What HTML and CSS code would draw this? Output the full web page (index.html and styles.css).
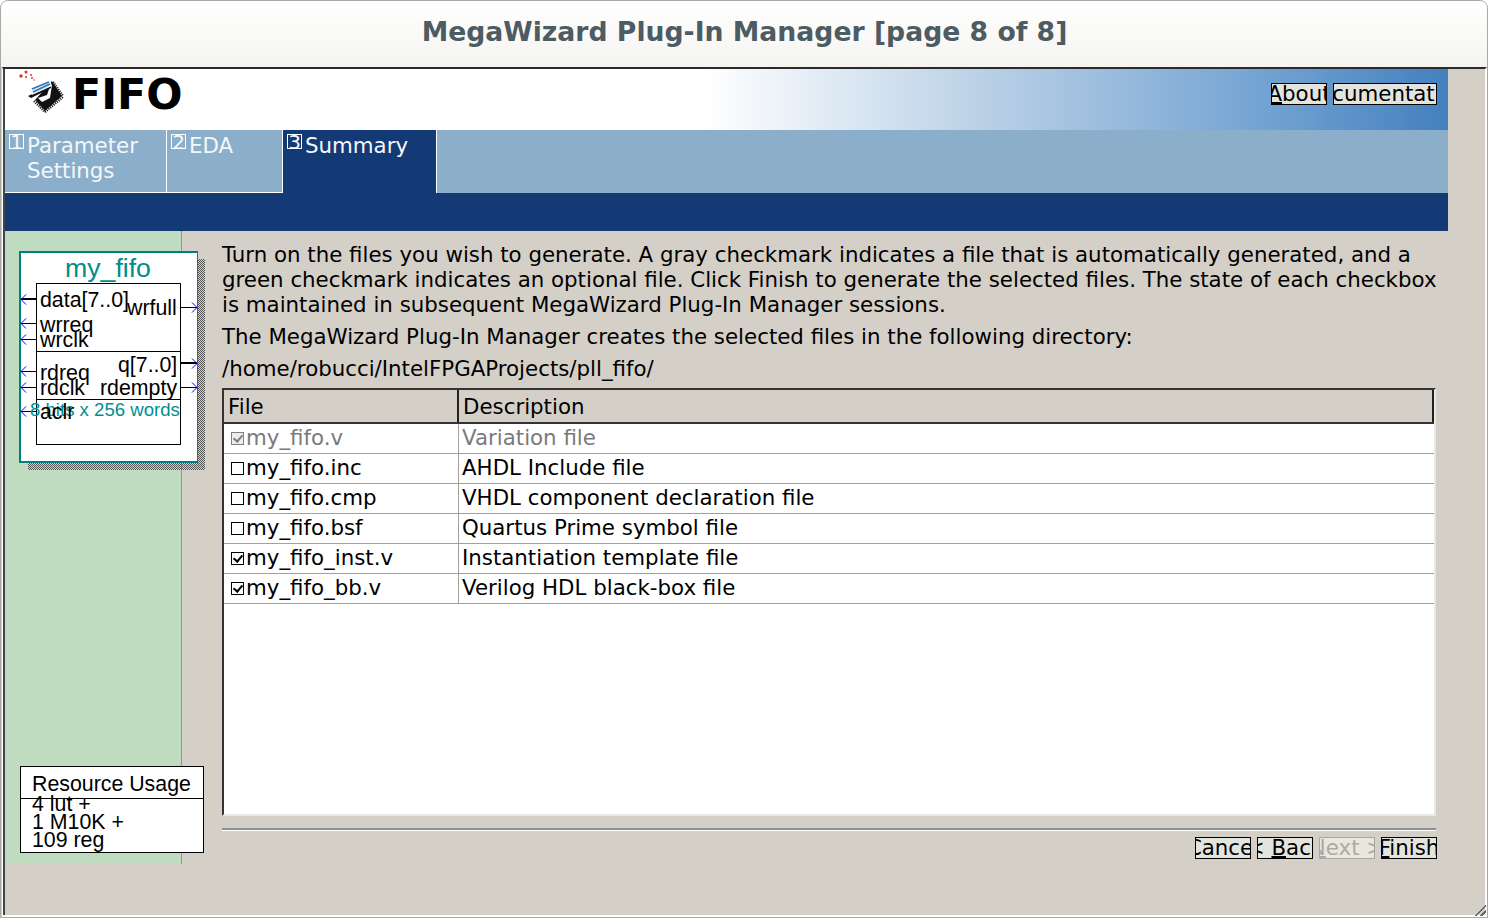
FILE: index.html
```html
<!DOCTYPE html>
<html lang="en">
<head>
<meta charset="utf-8">
<title>MegaWizard Plug-In Manager [page 8 of 8]</title>
<link rel="stylesheet" href="styles.css">
</head>
<body>
<div class="window">
  <div class="titlebar">MegaWizard Plug-In Manager [page 8 of 8]</div>
  <div class="client">
    <div class="main">
      <div class="banner">
        <svg class="logo" width="48" height="48" viewBox="0 0 48 48">
          <g fill="#d8352a"><circle cx="3" cy="7" r="1.7"/><circle cx="8" cy="3" r="1.5"/><circle cx="8" cy="8" r="1"/><circle cx="13" cy="6" r="1"/><circle cx="14" cy="9" r="1"/><circle cx="16" cy="11" r="0.7"/></g>
          <path d="M17 31 L34 12 L44 27 L27 42 Z" fill="#111"/>
          <path d="M35 13 L45 27 M27 43 L45 28 M16 32 L27 43" stroke="#222" stroke-width="2.4" stroke-dasharray="1.2 1" fill="none"/>
          <path d="M20 29 L29 26 L32 17 L34 16 L32 29 L24 33 Z" fill="#fff"/>
          <path d="M10 27 L33 16 L33 19 L13 29 Z" fill="#111"/>
          <path d="M11 20 L32 11 L34 17 L14 26 Z" fill="#f2f5f8"/>
          <path d="M14 20 L31 13 M15 23 L32 15" stroke="#2f78b8" stroke-width="1.8" fill="none"/>
        </svg>
        <h1 class="fifo">FIFO</h1>
        <div class="banner-buttons">
          <div class="btn btn-about"><span><u>A</u>bout</span></div>
          <div class="btn btn-doc"><span>Documentation</span></div>
        </div>
      </div>
      <div class="tabs">
        <div class="tab tab-1"><span class="tabnum">1</span><span class="tablabel">Parameter Settings</span></div>
        <div class="tab tab-2"><span class="tabnum">2</span><span class="tablabel">EDA</span></div>
        <div class="tab tab-3 active"><span class="tabnum">3</span><span class="tablabel">Summary</span></div>
      </div>
      <div class="bluebar"></div>
    </div>
    <div class="content">
      <aside class="side">
        <div class="diagram">
          <div class="shadow"></div>
          <div class="sym">
            <div class="sym-name">my_fifo</div>
          </div>
          <div class="core"></div>
          <div class="rule r1"></div>
          <div class="rule r2"></div>
          <svg class="pins" width="190" height="220" viewBox="0 0 190 220">
            <g stroke="#000" fill="none">
              <path d="M1 49H16" stroke-width="2"/><path d="M1 73.5H16M1 89.5H16M1 121.5H16M1 137.5H16M1 161.5H16M161 57.5H177M161 137.5H177"/><path d="M160 113H177" stroke-width="2"/>
            </g>
            <g stroke="#00f" fill="none">
              <path d="M6 44.5L1 49.5L6 54.5M6 68.5L1 73.5L6 78.5M6 84.5L1 89.5L6 94.5M6 116.5L1 121.5L6 126.5M6 132.5L1 137.5L6 142.5M6 156.5L1 161.5L6 166.5"/>
              <path d="M172 52.5L177 57.5L172 62.5M172 108.5L177 113.5L172 118.5M172 132.5L177 137.5L172 142.5"/>
            </g>
          </svg>
          <span class="pin" style="left:40px;top:288px">data[7..0]</span>
          <span class="pin" style="left:127px;top:296px">wrfull</span>
          <span class="pin" style="left:40px;top:313px">wrreq</span>
          <span class="pin" style="left:40px;top:328px">wrclk</span>
          <span class="pin" style="left:118px;top:353px">q[7..0]</span>
          <span class="pin" style="left:40px;top:361px">rdreq</span>
          <span class="pin" style="left:40px;top:376px">rdclk</span>
          <span class="pin" style="left:100px;top:376px">rdempty</span>
          <span class="pin pin-teal">8 bits x 256 words</span>
          <span class="pin" style="left:40px;top:400px">aclr</span>
        </div>
        <div class="resource">
          <div class="res-title">Resource Usage</div>
          <div class="res-body">4 lut +<br>1 M10K +<br>109 reg</div>
        </div>
      </aside>
      <section class="panel">
        <p class="para">Turn on the files you wish to generate. A gray checkmark indicates a file that is automatically generated, and a green checkmark indicates an optional file. Click Finish to generate the selected files. The state of each checkbox is maintained in subsequent MegaWizard Plug-In Manager sessions.</p>
        <p class="para">The MegaWizard Plug-In Manager creates the selected files in the following directory:</p>
        <p class="para">/home/robucci/IntelFPGAProjects/pll_fifo/</p>
        <div class="table">
          <div class="thead"><div class="th th-file">File</div><div class="th th-desc">Description</div></div>
          <div class="row muted"><div class="cell c-file"><span class="check on dim"></span>my_fifo.v</div><div class="cell c-desc">Variation file</div></div>
          <div class="row"><div class="cell c-file"><span class="check"></span>my_fifo.inc</div><div class="cell c-desc">AHDL Include file</div></div>
          <div class="row"><div class="cell c-file"><span class="check"></span>my_fifo.cmp</div><div class="cell c-desc">VHDL component declaration file</div></div>
          <div class="row"><div class="cell c-file"><span class="check"></span>my_fifo.bsf</div><div class="cell c-desc">Quartus Prime symbol file</div></div>
          <div class="row"><div class="cell c-file"><span class="check on"></span>my_fifo_inst.v</div><div class="cell c-desc">Instantiation template file</div></div>
          <div class="row"><div class="cell c-file"><span class="check on"></span>my_fifo_bb.v</div><div class="cell c-desc">Verilog HDL black-box file</div></div>
        </div>
        <div class="sep"></div>
        <div class="actions">
          <div class="btn"><span>Cancel</span></div>
          <div class="btn"><span>&lt; <u>B</u>ack</span></div>
          <div class="btn disabled"><span><u>N</u>ext &gt;</span></div>
          <div class="btn"><span><u>F</u>inish</span></div>
        </div>
      </section>
    </div>
    <div class="grip"></div>
  </div>
</div>
</body>
</html>
```
FILE: styles.css
```css
* { box-sizing: border-box; }
html, body { margin: 0; height: 100%; overflow: hidden; }
body { font-family: "DejaVu Sans", sans-serif; font-size: 21.33px; color: #000; background: #fff; }

.window { width: 1488px; height: 918px; display: flex; flex-direction: column; background: #d4d0c8; border: 1px solid #a9a9a6; border-radius: 8px 8px 0 0; overflow: hidden; position: relative; }
.titlebar { height: 66px; flex: none; background: linear-gradient(#fff, #f5f4f1); display: flex; align-items: center; justify-content: center; padding: 0 0 6px 1px; font-weight: bold; font-size: 26.67px; color: #4d5b63; }

.client { flex: 1; min-height: 0; margin: 0 0 0 1px; border-top: 2px solid #2b2b2b; border-left: 1px solid #fff; position: relative; background: #d4d0c8; box-shadow: inset 2px 0 0 #444; border-right: 2px solid #fff; border-bottom: 2px solid #fff; padding-left: 2px; }

.main { width: 1443px; }
.banner { height: 61px; display: flex; align-items: flex-start; background: linear-gradient(90deg, #fff 48.5%, #b9d0e6 68%, #78a6d4 86%, #4380be 100%); position: relative; }
.logo { flex: none; margin: 0 0 0 13px; }
.fifo { margin: 3px 0 0 6px; font-size: 42.67px; font-weight: bold; line-height: 44px; }
.banner-buttons { margin: 14px 11px 0 auto; display: flex; gap: 6px; }

.btn { width: 56px; height: 22px; border: 1px solid #000; background: #e4e4de; display: flex; justify-content: center; align-items: center; overflow: hidden; font-size: 21.33px; line-height: 22px; white-space: nowrap; flex: none; }
.btn span { flex: none; }
.btn u { text-decoration-thickness: 2px; text-underline-offset: 1px; }
.btn-doc { width: 104px; }
.btn.disabled { border-color: #a8a8a4; background: #eae8da; color: #aaaaa8; }

.tabs { height: 63px; display: flex; background: #8baeca; }
.tab { height: 63px; display: flex; color: #f4f7fa; line-height: 25px; padding: 3px 0 0 4px; border-right: 1px solid #fff; border-bottom: 1px solid #fff; }
.tab-1 { width: 162px; }
.tab-2 { width: 116px; }
.tab-3 { width: 154px; border-bottom: 0; background: #143a76; }
.tabnum { flex: none; width: 15px; height: 15px; border: 1px solid #fff; margin-right: 3px; margin-top: 1px; font-size: 20px; line-height: 14px; text-align: center; overflow: hidden; }
.bluebar { height: 38px; background: #143a76; }

.content { display: flex; height: 633px; }
.side { width: 177px; height: 633px; flex: none; background: #c0dcc0; border-right: 1px solid #8a9a8a; display: flex; flex-direction: column; justify-content: flex-end; position: relative; }

.diagram { position: absolute; left: -5px; top: -231px; width: 0; height: 0; font-family: "Liberation Sans", sans-serif; }
.shadow { position: absolute; left: 28px; top: 259px; width: 177px; height: 211px; background: repeating-conic-gradient(#555 0 25%, transparent 0 50%) 0 0 / 2px 2px; }
.sym { position: absolute; left: 19px; top: 251px; width: 179px; height: 212px; background: #fff; border: 1px solid #008080; border-width: 2px 1px 2px 2px; }
.sym-name { color: #008c8c; font-size: 26.67px; line-height: 30px; text-align: center; margin-left: -2px; }
.core { position: absolute; left: 36px; top: 283px; width: 145px; height: 162px; border: 1px solid #000; }
.rule { position: absolute; left: 36px; width: 145px; height: 1px; background: #000; }
.r1 { top: 351px; }
.r2 { top: 399px; }
.pins { position: absolute; left: 20px; top: 250px; }
.pin { position: absolute; font-size: 21.33px; line-height: 24px; white-space: nowrap; color: #000; }
.pin-teal { left: 30px; top: 398px; font-size: 18.6px; color: #008f8f; }

.resource { margin: 0 0 11px 15px; width: 184px; height: 87px; background: #fff; border: 1px solid #000; font-family: "Liberation Sans", sans-serif; font-size: 21.33px; position: relative; flex: none; }
.res-title { height: 32px; border-bottom: 1px solid #000; padding-left: 11px; line-height: 34px; }
.res-body { padding-left: 11px; line-height: 18px; margin-top: -4px; }

.panel { flex: 1; min-width: 0; padding: 11px 49px 0 40px; display: flex; flex-direction: column; }
.para { margin: 0 -8px 7px 0; line-height: 25px; }

.table { height: 428px; background: #fff; border: 2px solid; border-color: #333 #e8e8e4 #e8e8e4 #333; flex: none; }
.thead { height: 34px; display: flex; background: #d4d0c8; border-bottom: 2px solid #333; }
.th { line-height: 33px; padding-left: 4px; border-right: 2px solid #222; }
.th-file { width: 235px; }
.th-desc { flex: 1; }
.row { height: 30px; display: flex; border-bottom: 1px solid #a0a0a0; line-height: 28px; }
.cell { padding-left: 4px; white-space: nowrap; }
.c-file { width: 235px; border-right: 1px solid #a0a0a0; }
.c-desc { flex: 1; padding-left: 3px; }
.muted { color: #7a7a7a; }
.check { display: inline-block; vertical-align: 0; width: 13px; height: 13px; border: 1px solid #000; background: #fff; margin: 0 2px 0 3px; position: relative; }
.check.dim { border-color: #808080; background: #eeeeee; }
.check.on::after { content: ""; position: absolute; left: 3px; top: 0; width: 4px; height: 7px; border: solid #000; border-width: 0 2px 2px 0; transform: rotate(40deg); }
.check.dim.on::after { border-color: #808080; }

.sep { height: 3px; margin-top: 12px; background: #8f8f8b; border-bottom: 1px solid #fff; flex: none; }
.actions { margin-top: 6px; display: flex; justify-content: flex-end; gap: 6px; margin-right: -1px; }

.grip { position: absolute; right: -1px; bottom: -1px; width: 13px; height: 13px; background: repeating-linear-gradient(135deg, transparent 0 2px, #666 2px 4px); clip-path: polygon(100% 0, 100% 100%, 0 100%); }
```
